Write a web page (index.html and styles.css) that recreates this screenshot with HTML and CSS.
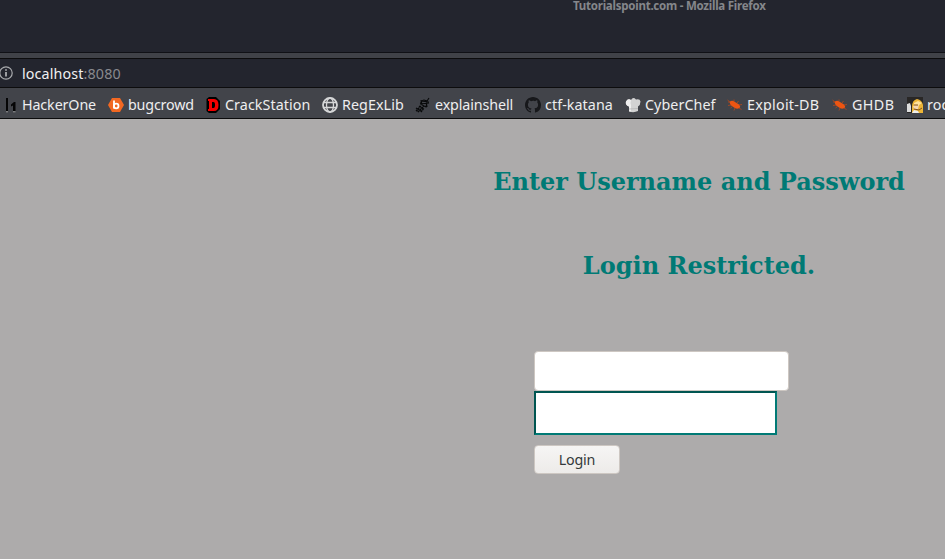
FILE: index.html
```html
<!DOCTYPE html>
<html lang="en">
<head>
<meta charset="utf-8">
<title>Tutorialspoint.com</title>
<link rel="stylesheet" href="styles.css">
</head>
<body>
<header class="titlebar"><span class="window-title">Tutorialspoint.com - Mozilla Firefox</span></header>
<div class="strip"></div>
<div class="urlbar">
  <svg class="info" viewBox="0 0 14 14"><circle cx="7" cy="7" r="6.2" fill="none" stroke="#a9abae" stroke-width="1.2"/><path d="M7 6v4.500M7 3.300v1.500" stroke="#c4c5c7" stroke-width="1.5"/></svg>
  <span class="url">localhost<span class="port">:8080</span></span>
</div>
<nav class="bookmarks">
  <a class="bookmark"><svg viewBox="0 0 16 16"><path d="M4 1h2v13H4zM9 7.500l3-2.500h1.500v9H11V8.500L9 9.500z" fill="#050506"/><path d="M4 14.800h2M11 14.800h2.500" stroke="#aaa" stroke-width=".8"/></svg><span class="label label-snug">HackerOne</span></a>
  <a class="bookmark"><svg viewBox="0 0 16 16"><path d="M4 1h8l4 7-4 7H4L0 8z" fill="#f26822"/><path d="M6 3.500v8" stroke="#fff" stroke-width="1.8"/><circle cx="8.200" cy="9" r="2.300" fill="none" stroke="#fff" stroke-width="1.800"/></svg><span class="label label-tight">bugcrowd</span></a>
  <a class="bookmark"><svg viewBox="0 0 16 16"><path d="M4 0h7l4 4v8l-4 4H4L1.500 14V2z" fill="#000"/><path fill-rule="evenodd" d="M3 2h6q4.500 0 4.500 6T9 14H3v-2h1V4H3zM7 5v6h1.500q1.500 0 1.500-3T8.500 5z" fill="#f50000"/></svg><span class="label">CrackStation</span></a>
  <a class="bookmark"><svg viewBox="0 0 16 16"><g fill="none" stroke="#d5d6d7" stroke-width="1.300"><circle cx="8" cy="8" r="7" stroke-width="1.800"/><ellipse cx="8" cy="8" rx="3.500" ry="7"/><path d="M1.500 5.500h13M1.500 10.500h13"/></g></svg><span class="label">RegExLib</span></a>
  <a class="bookmark"><svg viewBox="0 0 16 16"><g fill="none" stroke="#08090a"><path d="M6 7q-1-3 3-4l3 1 2-3M6 4l8 1M5 7l9-1M6 3l1 5 4 2 1-6M11 3l1 7" stroke-width="1.100"/><path d="M1 14l5-5M3 15l6-6M1 11l5 3M1 13l3 2M4 9l4 3M6 15l3-4" stroke-width="1.300" stroke-dasharray="2 .5"/></g></svg><span class="label label-snug">explainshell</span></a>
  <a class="bookmark"><svg viewBox="0 0 16 16"><path fill="#17181b" d="M8 0C3.580 0 0 3.580 0 8c0 3.540 2.290 6.530 5.470 7.590.4.070.55-.17.55-.38 0-.19-.01-.82-.01-1.490-2.010.37-2.530-.49-2.690-.94-.09-.23-.48-.94-.82-1.130-.28-.15-.68-.52-.01-.53.63-.01 1.080.58 1.230.82.72 1.210 1.870.87 2.330.66.07-.52.28-.87.51-1.070-1.780-.2-3.640-.89-3.640-3.950 0-.87.31-1.590.82-2.150-.08-.2-.36-1.020.08-2.120 0 0 .67-.21 2.200.82A7.500 7.500 0 0 1 8 3.860c.68 0 1.360.09 2 .27 1.530-1.040 2.200-.82 2.200-.82.44 1.100.16 1.920.08 2.120.51.56.82 1.270.82 2.150 0 3.070-1.870 3.750-3.650 3.950.29.25.54.73.54 1.480 0 1.070-.01 1.930-.01 2.200 0 .21.15.46.55.38A8 8 0 0 0 16 8c0-4.420-3.580-8-8-8z"/></svg><span class="label">ctf-katana</span></a>
  <a class="bookmark"><svg viewBox="0 0 16 16"><path d="M4 9.500Q0 8 1 4.500 3 1 6 3 8-.5 11 2.500q4-1 4.500 2Q15.500 8 13 9.500v4.500q-4 2-9 .5z" fill="#d2d2d2"/><path d="M6 3q-1 3 0 5v6.500l-2-.3V9.500Q0 8 1 4.500 3 1 6 3z" fill="#efefef"/><path d="M4 12l9-.5" stroke="#b4b4b4" stroke-width=".8"/></svg><span class="label">CyberChef</span></a>
  <a class="bookmark"><svg viewBox="0 0 16 16"><g id="bug"><path d="M2.500 5Q5 2.500 8 5l4 2.500q2 2 .5 3.500-3 1.500-5.500-.5L3.500 8z" fill="#ed5512"/><path d="M7 4.500V2.500M10 6l1.500-2M12 8l3-.5M4 8l-3 .5M5.500 9.500l-2 1.500M8 11l-1 2.500M12 11l2.500 1.500M3 5L.5 3M3 5L1 5" stroke="#a84720" fill="none" stroke-width=".9"/></g></svg><span class="label label-wide">Exploit-DB</span></a>
  <a class="bookmark"><svg viewBox="0 0 16 16"><use href="#bug"/></svg><span class="label label-wider">GHDB</span></a>
  <a class="bookmark"><svg viewBox="0 0 16 16"><path d="M0 0h16v16H0z" fill="#292726"/><path d="M0 7l3-1 1 3v6H0z" fill="#ddd"/><path d="M5 10q0-7 5-8 5 1 6 6v8H5z" fill="#edb536"/><path d="M7 6l4-2 4 2-3 2-5 1z" fill="#ffe29b"/><path d="M6 9l6-1-1 4H7z" fill="#f5d8b4"/><path d="M7 8h4M7 12l5 1 3-2" stroke="#805020" fill="none"/><path d="M5 16l2-3 4 1 1 2z" fill="#eee"/></svg><span class="label">roo</span></a>
</nav>
<main class="page">
  <h2 class="heading">Enter Username and Password</h2>
  <h2 class="heading">Login Restricted.</h2>
  <form class="login">
    <input class="field username" type="text" aria-label="Username">
    <input class="field password" type="password" aria-label="Password">
    <button class="submit" type="button">Login</button>
  </form>
</main>
</body>
</html>
```
FILE: styles.css
```css
* { box-sizing: border-box; }
body { margin: 0; width: 945px; height: 559px; overflow: hidden; background: #adabab; font-family: "Noto Sans", sans-serif; }
.titlebar { height: 53px; padding-left: 573px; background: #23252e; border-bottom: 1px solid #101116; }
.window-title { display: block; font-size: 11.500px; font-weight: 700; line-height: 12px; color: #85878b; white-space: nowrap; letter-spacing: -.24px; }
.strip { height: 6px; background: #404248; border-bottom: 1px solid #0c0c0d; }
.urlbar { display: flex; align-items: center; height: 29px; background: #23252e; border-bottom: 1px solid #0c0c0d; }
.info { width: 14px; height: 14px; margin-left: -1px; }
.url { margin: 2px 0 0 9px; font-size: 14.300px; line-height: 20px; color: #f0f0f1; letter-spacing: .13px; }
.port { color: #898a8f; }
.bookmarks { display: grid; grid-template-columns: 106px 97px 117px 93px 110px 100px 102px 105px 75px 80px; height: 31px; padding: 2px 0 0 2px; background: #42444a; border-bottom: 1px solid #0c0c0d; overflow: hidden; }
.bookmark { display: flex; align-items: center; gap: 4px; white-space: nowrap; font-size: 14.300px; line-height: 20px; color: #eeeeef; }
.bookmark svg { width: 16px; height: 16px; flex: none; margin-top: 1px; }
.label { padding-top: 2px; letter-spacing: .07px; }
.label-snug { letter-spacing: -.12px; }
.label-tight { letter-spacing: -.18px; }
.label-wide { letter-spacing: .25px; }
.label-wider { letter-spacing: .4px; }
.page { display: flow-root; height: 440px; }
.heading { width: 412px; margin: 49px 0 0 493px; font: 700 24px/28px "DejaVu Serif", serif; color: #007a75; text-align: center; white-space: nowrap; }
.heading + .heading { margin-top: 56px; }
.login { display: flex; flex-direction: column; align-items: flex-start; margin: 71px 0 0 534px; }
.field { display: block; padding: 0 10px; background: #fff; outline: none; }
.username { width: 255px; height: 40px; border: 1px solid #cdc7c2; border-radius: 4px; }
.password { width: 243px; height: 44px; border: 2px solid; border-color: #005551 #007a75 #007a75 #005551; }
.submit { width: 86px; height: 29px; margin-top: 10px; padding: 0; border: 1px solid #cdc7c2; border-radius: 4px; background: linear-gradient(#f6f5f4, #edebe9); color: #34393b; font: 14.300px/20px "Noto Sans", sans-serif; letter-spacing: -.2px; }
```
